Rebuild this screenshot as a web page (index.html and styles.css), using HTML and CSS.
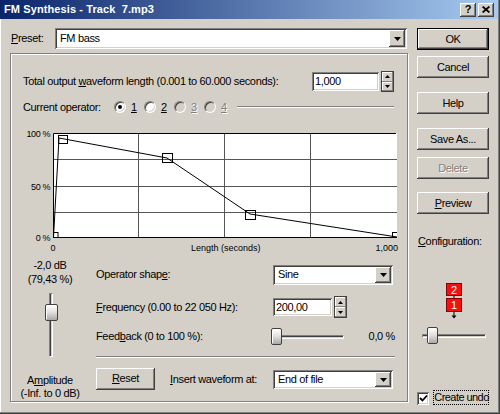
FILE: index.html
```html
<!DOCTYPE html>
<html>
<head>
<meta charset="utf-8">
<title>FM Synthesis</title>
<link rel="stylesheet" href="styles.css">
</head>
<body>
<div class="window">
  <div class="titlebar">
    <span class="title">FM Synthesis - Track&nbsp; 7.mp3</span>
    <div class="caption-btns">
      <span class="cbtn help">?</span>
      <span class="cbtn close"><svg width="8" height="7" viewBox="0 0 8 7"><path d="M0.6 0.5 L7.4 6.5 M7.4 0.5 L0.6 6.5" stroke="#000" stroke-width="1.7"/></svg></span>
    </div>
  </div>
  <div class="client">
    <div class="main">
      <div class="preset-row">
        <span class="preset-label"><u>P</u>reset:</span>
        <div class="combo preset-combo"><span class="combo-text">FM bass</span><span class="combo-btn"><svg width="7" height="4" viewBox="0 0 7 4"><path d="M0 0H7L3.5 4Z"/></svg></span></div>
      </div>
      <div class="group">
        <div class="row-len">
          <span>Total output <u>w</u>aveform length (0.001 to 60.000 seconds):</span>
          <div class="spin">
            <div class="edit edit-len">1,000</div>
            <div class="spin-btns tall">
              <span class="sbtn"><svg width="5" height="3" viewBox="0 0 5 3"><path d="M0 3H5L2.5 0Z"/></svg></span>
              <span class="sbtn"><svg width="5" height="3" viewBox="0 0 5 3"><path d="M0 0H5L2.5 3Z"/></svg></span>
            </div>
          </div>
        </div>
        <div class="row-op">
          <span class="op-label">Current operator:</span>
          <span class="radio-item"><span class="radio checked"></span><u>1</u></span>
          <span class="radio-item"><span class="radio"></span><u>2</u></span>
          <span class="radio-item disabled"><span class="radio dis"></span><u>3</u></span>
          <span class="radio-item disabled"><span class="radio dis"></span><u>4</u></span>
          <span class="etch op-line"></span>
        </div>
        <svg class="graph" width="396" height="134" viewBox="11 120 396 134">
          <defs><clipPath id="plot"><rect x="53" y="133" width="344" height="104.5"/></clipPath></defs>
          <rect x="53" y="133" width="344" height="104" fill="#fff"/>
          <g stroke="#555" stroke-width="1">
            <line x1="138.5" y1="133" x2="138.5" y2="237"/>
            <line x1="224.5" y1="133" x2="224.5" y2="237"/>
            <line x1="310.5" y1="133" x2="310.5" y2="237"/>
            <line x1="53" y1="159.5" x2="397" y2="159.5"/>
            <line x1="53" y1="186.5" x2="397" y2="186.5"/>
            <line x1="53" y1="212.5" x2="397" y2="212.5"/>
          </g>
          <path d="M53.5 237 V133.5 H396" stroke="#000" fill="none"/>
          <path d="M53 237.5 H397" stroke="#000" fill="none"/>
          <text class="ylab" x="50" y="137" text-anchor="end">100 %</text>
          <text class="ylab" x="50" y="190" text-anchor="end">50 %</text>
          <text class="ylab" x="50" y="241" text-anchor="end">0 %</text>
          <text class="xlab" x="53" y="251" text-anchor="middle">0</text>
          <text class="xlab" x="191" y="251">Length (seconds)</text>
          <text class="xlab" x="398" y="251" text-anchor="end">1,000</text>
          <polyline points="53.5,237 59,138 167,158 250,214 397,237" fill="none" stroke="#000" stroke-width="1"/>
          <g clip-path="url(#plot)" fill="none" stroke="#000">
            <rect x="49" y="232.5" width="9" height="9"/>
            <rect x="58.5" y="135.5" width="9" height="8"/>
            <rect x="162.5" y="153.5" width="10" height="9"/>
            <rect x="245.5" y="210.5" width="10" height="9"/>
            <rect x="392.5" y="232.5" width="9" height="9"/>
          </g>
        </svg>
        <div class="bottom">
          <div class="amp">
            <div class="amp-val">-2,0 dB<br>(79,43 %)</div>
            <div class="vslider"><span class="vtrack"></span><span class="thumb vthumb"></span></div>
            <div class="amp-label">A<u>m</u>plitude<br>(-Inf. to 0 dB)</div>
          </div>
          <div class="params">
            <div class="prow prow-shape">
              <span class="plabel">Operator shap<u>e</u>:</span>
              <div class="combo small-combo"><span class="combo-text">Sine</span><span class="combo-btn"><svg width="7" height="4" viewBox="0 0 7 4"><path d="M0 0H7L3.5 4Z"/></svg></span></div>
            </div>
            <div class="prow prow-freq">
              <span class="plabel"><u>F</u>requency (0.00 to 22 050 Hz):</span>
              <div class="spin">
                <div class="edit edit-freq">200,00</div>
                <div class="spin-btns tall2">
                  <span class="sbtn"><svg width="5" height="3" viewBox="0 0 5 3"><path d="M0 3H5L2.5 0Z"/></svg></span>
                  <span class="sbtn"><svg width="5" height="3" viewBox="0 0 5 3"><path d="M0 0H5L2.5 3Z"/></svg></span>
                </div>
              </div>
            </div>
            <div class="prow prow-fb">
              <span class="plabel">Feed<u>b</u>ack (0 to 100 %):</span>
              <div class="hslider fb-slider"><span class="htrack"></span><span class="thumb hthumb fb-thumb"></span></div>
              <span class="fb-val">0,0 %</span>
            </div>
            <div class="etch sep"></div>
            <div class="prow prow-reset">
              <span class="btn reset-btn"><u>R</u>eset</span>
              <span class="insert-label"><u>I</u>nsert waveform at:</span>
              <div class="combo small-combo end-combo"><span class="combo-text">End of file</span><span class="combo-btn"><svg width="7" height="4" viewBox="0 0 7 4"><path d="M0 0H7L3.5 4Z"/></svg></span></div>
            </div>
          </div>
        </div>
      </div>
    </div>
    <div class="side">
      <span class="btn default">OK</span>
      <span class="btn b-cancel">Cancel</span>
      <span class="btn b-help">Help</span>
      <span class="btn b-save">Save As...</span>
      <span class="btn b-delete"><span class="distext">Delete</span></span>
      <span class="btn b-preview"><u>P</u>review</span>
      <div class="config-label"><u>C</u>onfiguration:</div>
      <svg class="config-icon" width="72" height="38" viewBox="0 0 72 38">
        <line x1="37" y1="13" x2="37" y2="17" stroke="#000"/>
        <rect x="29.5" y="1.5" width="15" height="12" fill="#f21010" stroke="#8a0000"/>
        <text class="cfgnum" x="37" y="11.5" text-anchor="middle">2</text>
        <rect x="29.5" y="16.5" width="15" height="13" fill="#f21010" stroke="#8a0000"/>
        <text class="cfgnum" x="37" y="27" text-anchor="middle">1</text>
        <line x1="37" y1="29.5" x2="37" y2="34" stroke="#000"/>
        <path d="M34.5 33.5 L39.5 33.5 L37 36.5 Z" fill="#000"/>
      </svg>
      <div class="hslider cfg-slider"><span class="htrack"></span><span class="thumb hthumb cfg-thumb"></span></div>
      <div class="undo-row">
        <span class="checkbox"><svg width="9" height="9" viewBox="0 0 9 9"><path d="M1 4 L3.5 6.5 L8 1.5" fill="none" stroke="#000" stroke-width="1.8"/></svg></span>
        <span class="undo-label">Create undo</span>
      </div>
    </div>
  </div>
</div>
</body>
</html>
```

FILE: styles.css
```css
* { box-sizing: border-box; }
html, body { margin: 0; padding: 0; }
body {
  width: 500px;
  height: 414px;
  overflow: hidden;
  background: #d4d0c8;
  font-family: "Liberation Sans", Arial, sans-serif;
  font-size: 11px;
  line-height: 13px;
  letter-spacing: -0.35px;
  color: #000;
}
u { text-decoration: underline; text-underline-offset: 1px; }

.window {
  width: 500px;
  height: 414px;
  background: #d4d0c8;
  box-shadow: inset -1px -1px #404040, inset -2px -2px #808080, inset 1px 0 #ffffff;
  display: flex;
  flex-direction: column;
}

/* title bar */
.titlebar {
  height: 19px;
  width: 498px;
  background: linear-gradient(to right, #0a246a, #a6caf0);
  display: flex;
  align-items: center;
  justify-content: space-between;
  padding: 0 4px 0 4px;
}
.title { color: #fff; font-weight: bold; letter-spacing: 0.1px; }
.caption-btns { display: flex; gap: 2px; }
.cbtn {
  width: 16px;
  height: 14px;
  background: #d4d0c8;
  box-shadow: inset -1px -1px #404040, inset 1px 1px #fff, inset -2px -2px #808080;
  display: flex;
  align-items: center;
  justify-content: center;
  font-weight: bold;
  font-size: 11px;
  letter-spacing: 0;
  padding-bottom: 1px;
}

/* client */
.client { display: flex; padding-left: 10px; }
.main { width: 398px; padding-top: 9px; }
.preset-row { display: flex; align-items: center; height: 21px; }
.preset-label { width: 45px; padding-left: 1px; }

.combo {
  display: flex;
  background: #fff;
  box-shadow: inset 1px 1px #808080, inset -1px -1px #fff, inset 2px 2px #404040, inset -2px -2px #d4d0c8;
  padding: 2px;
}
.preset-combo { width: 352px; height: 21px; }
.combo-text { flex: 1; padding-left: 3px; display: flex; align-items: center; white-space: nowrap; }
.combo-btn {
  width: 16px;
  background: #d4d0c8;
  box-shadow: inset -1px -1px #404040, inset 1px 1px #fff, inset -2px -2px #808080;
  display: flex;
  align-items: center;
  justify-content: center;
}

/* group box */
.group {
  margin-top: 4px;
  height: 349px;
  border: 1px solid #808080;
  box-shadow: inset 1px 1px #fff, 1px 1px #fff;
}
.row-len {
  margin-top: 17px;
  height: 21px;
  padding: 0 13px 0 12px;
  display: flex;
  align-items: center;
  justify-content: space-between;
}
.spin { display: flex; align-items: center; }
.edit {
  background: #fff;
  box-shadow: inset 1px 1px #808080, inset -1px -1px #fff, inset 2px 2px #404040, inset -2px -2px #d4d0c8;
  padding-left: 3px;
  display: flex;
  align-items: center;
}
.edit-len { width: 67px; height: 19px; }
.edit-freq { width: 59px; height: 18px; }
.spin-btns {
  margin-left: 2px;
  width: 13px;
  display: flex;
  flex-direction: column;
  border: 1px solid #404040;
}
.spin-btns.tall { height: 21px; }
.spin-btns.tall2 { height: 22px; }
.sbtn {
  flex: 1;
  background: #d4d0c8;
  box-shadow: inset -1px -1px #808080, inset 1px 1px #fff;
  display: flex;
  align-items: center;
  justify-content: center;
}

.row-op {
  margin-top: 8px;
  height: 14px;
  padding: 0 13px 0 12px;
  display: flex;
  align-items: center;
}
.op-label { width: 91px; }
.radio-item { width: 30px; display: flex; align-items: center; }
.radio-item u { margin-left: 5px; }
.radio {
  width: 12px;
  height: 12px;
  border-radius: 50%;
  background: #fff;
  border: 1px solid;
  border-color: #808080 #fff #fff #808080;
  box-shadow: inset 1px 1px #404040, inset -1px -1px #d4d0c8;
  position: relative;
}
.radio.checked::after {
  content: "";
  position: absolute;
  left: 3px;
  top: 3px;
  width: 4px;
  height: 4px;
  border-radius: 50%;
  background: #000;
}
.radio.dis { background: #d4d0c8; }
.disabled u, .distext { color: #808080; text-shadow: 1px 1px #fff; }
.etch { height: 2px; border-top: 1px solid #808080; border-bottom: 1px solid #fff; }
.op-line { flex: 1; margin-left: 3px; }

.graph { display: block; margin-top: 6px; }
.ylab { font-family: "Liberation Sans", Arial, sans-serif; font-size: 9px; letter-spacing: -0.4px; }
.xlab { font-family: "Liberation Sans", Arial, sans-serif; font-size: 9px; letter-spacing: 0; }

/* bottom part */
.bottom { display: flex; }
.amp { width: 78px; padding-top: 4px; text-align: center; }
.amp-val { line-height: 14px; }
.amp-label { line-height: 13px; }
.vslider { position: relative; height: 81px; }
.vtrack {
  display: block;
  margin: 7px 0 0 38px;
  width: 4px;
  height: 64px;
  border-left: 1px solid #808080;
  border-top: 1px solid #808080;
  border-right: 1px solid #fff;
  border-bottom: 1px solid #fff;
  box-shadow: inset 1px 0 #404040;
}
.thumb {
  position: absolute;
  border: 1px solid #404040;
  border-radius: 2px;
  background: linear-gradient(to bottom, #ffffff, #e4e2dc 45%, #a8a8a8);
  box-shadow: inset 1px 1px #fff;
}
.vthumb { left: 34px; top: 11px; width: 13px; height: 17px; }

.params { margin-left: 7px; width: 299px; }
.prow { display: flex; align-items: center; }
.plabel { width: 177px; white-space: nowrap; }
.prow-shape { margin-top: 10px; height: 21px; }
.small-combo { width: 120px; height: 20px; }
.prow-freq { margin-top: 11px; height: 22px; }
.prow-fb { margin-top: 9px; height: 18px; }
.hslider { position: relative; height: 17px; }
.htrack {
  display: block;
  margin-top: 7px;
  height: 4px;
  border-top: 1px solid #808080;
  border-left: 1px solid #808080;
  border-bottom: 1px solid #fff;
  border-right: 1px solid #fff;
  box-shadow: inset 0 1px #404040;
}
.hthumb { top: 0; width: 11px; height: 17px; }
.fb-slider { width: 73px; margin-left: -2px; }
.fb-thumb { left: 0; }
.fb-val { margin-left: auto; }
.sep { margin-top: 11px; }
.prow-reset { margin-top: 9px; height: 23px; align-items: center; }
.insert-label { width: 103px; margin-left: 15px; white-space: nowrap; padding-top: 1px; }
.end-combo { margin-top: 2px; height: 19px; }

/* buttons */
.btn {
  display: flex;
  align-items: center;
  justify-content: center;
  height: 22px;
  width: 72px;
  background: #d4d0c8;
  box-shadow: inset -1px -1px #404040, inset 1px 1px #fff, inset -2px -2px #808080;
  white-space: nowrap;
}
.btn.default {
  box-shadow: inset 0 0 0 1px #000, inset -2px -2px #404040, inset 2px 2px #fff, inset -3px -3px #808080;
}
.reset-btn { width: 59px; }

.side { margin-left: 9px; width: 72px; padding-top: 9px; display: flex; flex-direction: column; }
.b-cancel { margin-top: 6px; }
.b-help { margin-top: 14px; }
.b-save { margin-top: 14px; }
.b-delete { margin-top: 7px; }
.b-preview { margin-top: 13px; }
.config-label { margin-top: 20px; height: 14px; line-height: 14px; padding-left: 1px; }
.config-icon { display: block; margin-top: 34px; }
.cfgnum { font-family: "Liberation Sans", Arial, sans-serif; font-size: 11px; fill: #fff; }
.cfg-slider { margin-top: 7px; width: 64px; margin-left: 5px; }
.cfg-thumb { left: 5px; }
.undo-row { margin-top: 46px; display: flex; align-items: flex-start; height: 15px; }
.checkbox {
  margin-top: 2px;
  width: 13px;
  height: 13px;
  background: #fff;
  box-shadow: inset 1px 1px #808080, inset -1px -1px #fff, inset 2px 2px #404040, inset -2px -2px #d4d0c8;
  display: flex;
  align-items: center;
  justify-content: center;
}
.undo-label {
  margin-left: 4px;
  width: 59px;
  height: 15px;
  line-height: 13px;
  padding: 1px 0 0 1px;
  outline: 1px dotted #000;
  outline-offset: -1px;
  white-space: nowrap;
  letter-spacing: -0.55px;
}
```
